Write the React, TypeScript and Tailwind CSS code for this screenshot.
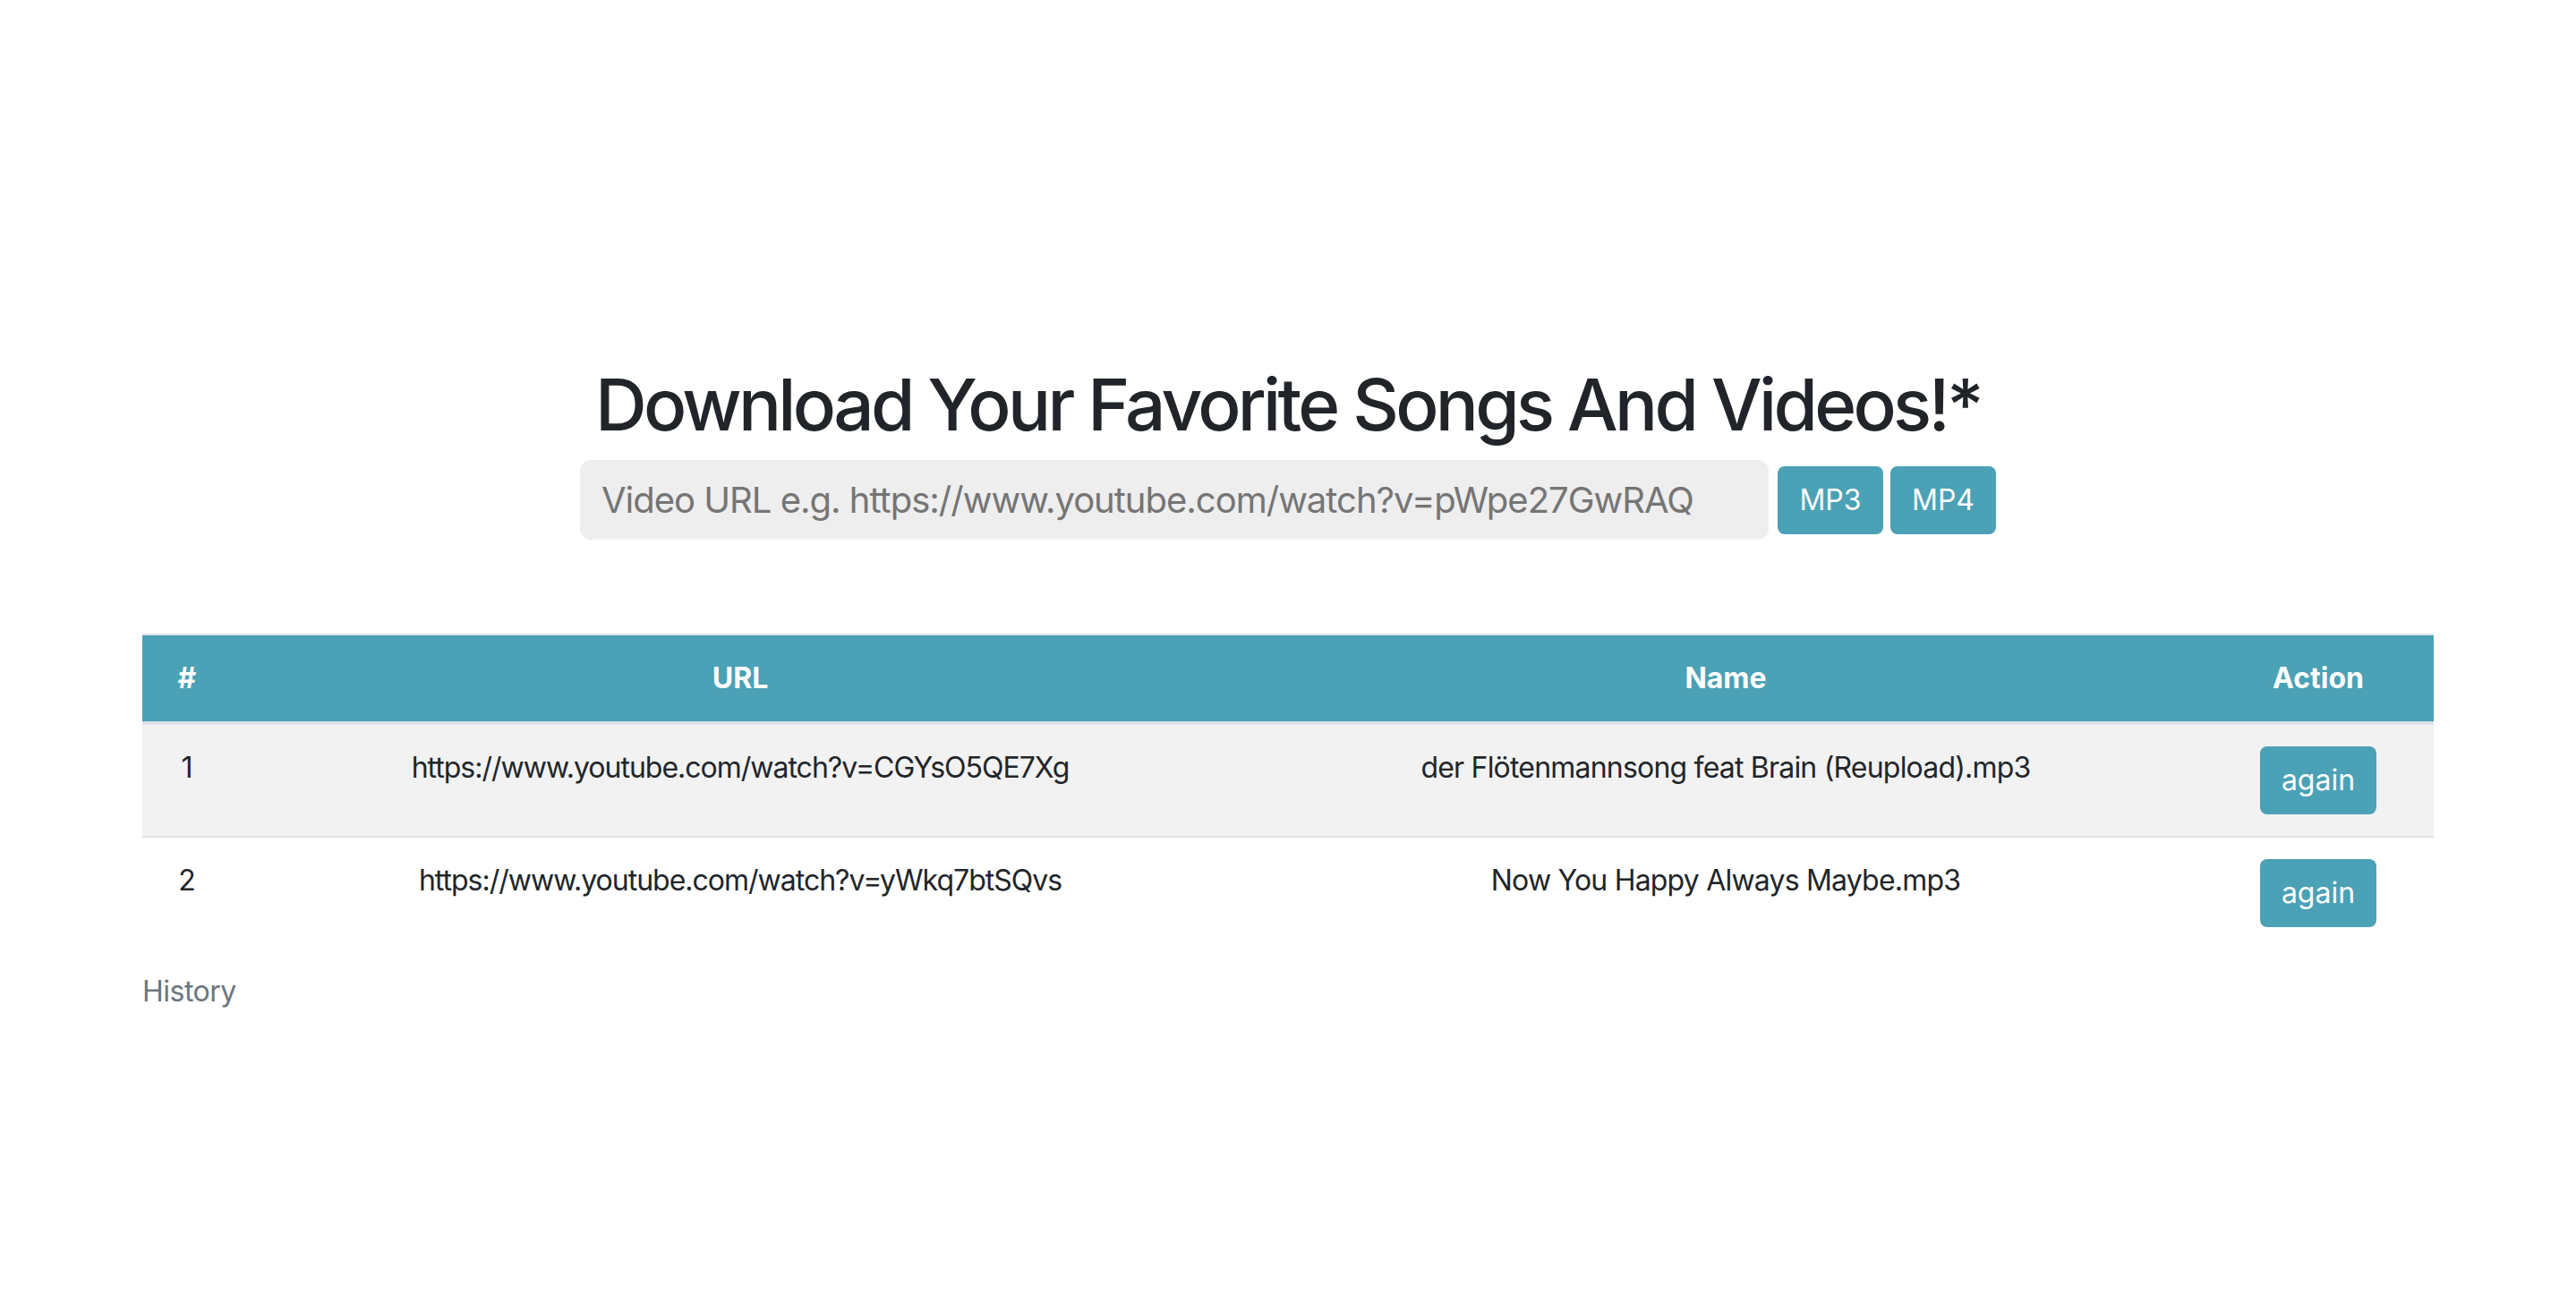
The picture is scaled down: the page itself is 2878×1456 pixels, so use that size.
import React from 'react';

interface HistoryEntry {
    id: number;
    url: string;
    name: string;
}

const history: HistoryEntry[] = [
    { id: 1, url: 'https://www.youtube.com/watch?v=CGYsO5QE7Xg', name: 'der Flötenmannsong feat Brain (Reupload).mp3' },
    { id: 2, url: 'https://www.youtube.com/watch?v=yWkq7btSQvs', name: 'Now You Happy Always Maybe.mp3' },
];

const App: React.FC = () => {
    return (
        <div className="min-h-screen bg-white text-[#212529] font-['Inter','Liberation_Sans',sans-serif]">
            <div className="pt-[404px] flex flex-col items-center">
                <h1 className="text-[80px] leading-[96px] font-medium tracking-[-3.7px] mb-[14px]">
                    Download Your Favorite Songs And Videos!*
                </h1>
                <div className="flex items-center">
                    <input
                        type="text"
                        placeholder="Video URL e.g. https://www.youtube.com/watch?v=pWpe27GwRAQ"
                        className="w-[1328px] h-[89px] rounded-xl bg-[#eeeeee] px-6 text-[40px] tracking-[-1px] text-[#212529] placeholder:text-[#757575] outline-none"
                    />
                    <button className="ml-[10px] h-[76px] w-[118px] rounded-lg bg-[#4ba1b5] text-white text-[32px]">MP3</button>
                    <button className="ml-2 h-[76px] w-[118px] rounded-lg bg-[#4ba1b5] text-white text-[32px]">MP4</button>
                </div>
            </div>

            <div className="mt-[105px] w-[2560px] mx-auto">
                <table className="w-full table-fixed border-separate border-spacing-0 text-[32px] leading-[48px] text-center">
                    <colgroup>
                        <col className="w-[100px]" />
                        <col className="w-[1136px]" />
                        <col className="w-[1066px]" />
                        <col className="w-[258px]" />
                    </colgroup>
                    <thead>
                        <tr className="bg-[#4ba1b5] text-white">
                            <th className="py-6 font-bold border-t-2 border-b-4 border-[#dee2e6]">#</th>
                            <th className="py-6 font-bold border-t-2 border-b-4 border-[#dee2e6]">URL</th>
                            <th className="py-6 font-bold border-t-2 border-b-4 border-[#dee2e6]">Name</th>
                            <th className="py-6 font-bold border-t-2 border-b-4 border-[#dee2e6]">Action</th>
                        </tr>
                    </thead>
                    <tbody>
                        {history.map((entry, i) => (
                            <tr key={entry.id} className={i % 2 === 0 ? 'bg-[#f2f2f2]' : 'bg-white'}>
                                <td className={`py-6 align-top ${i > 0 ? 'border-t-2 border-[#dee2e6]' : ''}`}>{entry.id}</td>
                                <td className={`py-6 align-top tracking-[-1px] ${i > 0 ? 'border-t-2 border-[#dee2e6]' : ''}`}>{entry.url}</td>
                                <td className={`py-6 align-top tracking-[-0.8px] ${i > 0 ? 'border-t-2 border-[#dee2e6]' : ''}`}>{entry.name}</td>
                                <td className={`py-6 align-top ${i > 0 ? 'border-t-2 border-[#dee2e6]' : ''}`}>
                                    <button className="h-[76px] w-[130px] rounded-lg bg-[#4ba1b5] text-white text-[32px]">again</button>
                                </td>
                            </tr>
                        ))}
                    </tbody>
                    <caption className="caption-bottom text-left pt-6 tracking-[-0.5px] text-[#6c757d]">History</caption>
                </table>
            </div>
        </div>
    );
};

export default App;
